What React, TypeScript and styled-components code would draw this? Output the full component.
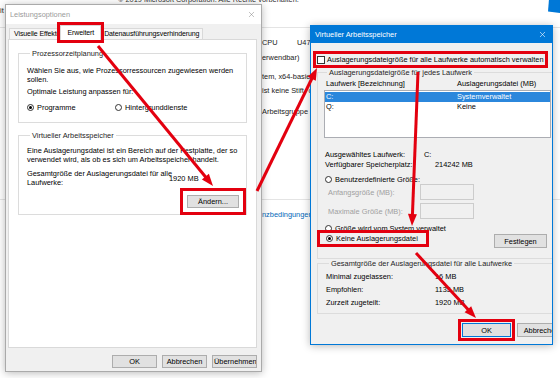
import { FC } from "react"
import styled, { createGlobalStyle, css } from "styled-components"
import { X } from "lucide-react"

const RED = "#e3000f"
const BLUE = "#0078d7"

const GlobalStyle = createGlobalStyle`
  html, body {
    margin: 0;
    padding: 0;
    background: #fff;
  }
  body {
    font-family: "Liberation Sans", Arial, sans-serif;
    font-size: 7.4px;
    color: #000;
  }
  * { box-sizing: border-box; }
`

// red annotation frame drawn round a control
const marked = (offset: number) => css`
  outline: 3px solid ${RED};
  outline-offset: ${offset}px;
`

const Screen = styled.div`
  position: relative;
  width: 560px;
  height: 378px;
  overflow: hidden;
  background: #fff;
  line-height: 9px;
`

/* ---------- system page behind the dialogs ---------- */

const Backdrop = styled.div`
  position: absolute;
  inset: 0;
  display: flex;
  flex-direction: column;
  color: #222;
  white-space: nowrap;
`

const BackdropHeader = styled.div`
  height: 28px;
  flex-shrink: 0;
  display: flex;
  align-items: flex-start;
  border-bottom: 1px solid #e4e4e4;
`

const EdgeText = styled.span`
  width: 118px;
  margin-top: 6px;
`

const Copyright = styled.span`
  margin-top: -5px;
  color: #333;
`

const Logo = styled.svg`
  margin-left: auto;
  margin-top: -1px;
`

const SpecColumn = styled.div`
  padding-left: 262px;
  display: flex;
  flex-direction: column;
`

const SpecLine = styled.div<{ $top: number }>`
  height: 9px;
  margin-top: ${p => p.$top}px;
`

const SpecKey = styled.span`
  display: inline-block;
  width: 35px;
`

const BackdropDivider = styled.div<{ $top: number }>`
  margin-top: ${p => p.$top}px;
  border-top: 1px solid #e4e4e4;
`

const BackdropLink = styled.div`
  padding-left: 262px;
  margin-top: 10px;
  color: #0067b8;
`

/* ---------- shared window parts ---------- */

const Window = styled.div`
  position: absolute;
  display: flex;
  flex-direction: column;
  background: #f0f0f0;
  box-shadow: 0 1px 8px rgba(0, 0, 0, 0.28);
  overflow: hidden;
`

const TitleBar = styled.div<{ $active?: boolean; $h: number }>`
  height: ${p => p.$h}px;
  flex-shrink: 0;
  display: flex;
  align-items: center;
  justify-content: space-between;
  padding: 0 5px 0 4px;
  background: ${p => (p.$active ? BLUE : "#fff")};
  color: ${p => (p.$active ? "#fff" : "#9a9a9a")};
`

const Button = styled.button<{ $w: number; $h?: number; $default?: boolean; $mark?: number }>`
  width: ${p => p.$w}px;
  height: ${p => p.$h ?? 13}px;
  padding: 0 1px;
  flex-shrink: 0;
  border: 1px solid ${p => (p.$default ? BLUE : "#adadad")};
  background: #e1e1e1;
  font: inherit;
  line-height: 9px;
  color: #000;
  white-space: nowrap;
  overflow: hidden;
  ${p => p.$mark !== undefined && marked(p.$mark)}
`

const Group = styled.fieldset<{ $pad: string; $top?: number }>`
  margin: ${p => p.$top ?? 0}px 0 0 0;
  min-width: 0;
  padding: ${p => p.$pad};
  border: 1px solid #dcdcdc;
  display: flex;
  flex-direction: column;
  white-space: nowrap;
`

const Legend = styled.legend`
  padding: 0 2px;
  margin-left: 3px;
  line-height: 9px;
  color: #1e1e1e;
`

const Text = styled.div<{ $top?: number; $muted?: boolean }>`
  margin-top: ${p => p.$top ?? 0}px;
  line-height: 9px;
  color: ${p => (p.$muted ? "#a0a0a0" : "#000")};
`

const RadioItem = styled.span<{ $mark?: boolean }>`
  display: inline-flex;
  align-items: center;
  gap: 3px;
  height: 9px;
  align-self: flex-start;
  ${p =>
    p.$mark &&
    css`
      padding: 0 7px 0 5px;
      margin-left: -4px;
      ${marked(1)}
    `}
`

const RadioDot = styled.span<{ $on?: boolean }>`
  width: 7px;
  height: 7px;
  border-radius: 50%;
  border: 1px solid #333;
  background: #fff;
  display: inline-flex;
  align-items: center;
  justify-content: center;
  &::after {
    content: "";
    width: 3px;
    height: 3px;
    border-radius: 50%;
    background: ${p => (p.$on ? "#000" : "transparent")};
  }
`

const Radio: FC<{ label: string; on?: boolean; mark?: boolean; top?: number }> = ({ label, on, mark, top }) => (
  <RadioItem $mark={mark} style={top ? { marginTop: top } : undefined}>
    <RadioDot $on={on} />
    {label}
  </RadioItem>
)

/* ---------- Leistungsoptionen ---------- */

const PerfWindow = styled(Window)`
  left: 5px;
  top: 4px;
  width: 257px;
  height: 368px;
  border: 1px solid #aaaaaa;
`

const TabStrip = styled.div`
  height: 15px;
  flex-shrink: 0;
  display: flex;
  align-items: flex-end;
  padding-left: 3px;
`

const Tab = styled.div<{ $selected?: boolean }>`
  position: relative;
  height: 11px;
  padding: 0 3px 0 4px;
  font-size: 7px;
  line-height: 10px;
  letter-spacing: -0.1px;
  white-space: nowrap;
  background: #f6f6f6;
  border: 1px solid #d9d9d9;
  border-bottom: none;
  ${p =>
    p.$selected &&
    css`
      z-index: 1;
      height: 15px;
      line-height: 14px;
      padding: 0 6px;
      margin: 0 -2px -1px -4px;
      background: #fff;
      ${marked(0)}
    `}
`

const TabPanel = styled.div`
  flex: 1;
  margin: 0 4px 0 2px;
  padding: 9px 9px 0 9px;
  background: #fff;
  border: 1px solid #d9d9d9;
  display: flex;
  flex-direction: column;
`

const ChoiceRow = styled.div`
  margin-top: 7px;
  display: grid;
  grid-template-columns: 88px auto;
`

const TotalRow = styled.div`
  margin-top: 5px;
  display: flex;
  align-items: center;
`

const TotalLabel = styled.div`
  width: 142px;
  flex-shrink: 0;
  line-height: 9px;
`

const GroupActions = styled.div`
  margin-top: 8px;
  display: flex;
  justify-content: flex-end;
`

const WindowActions = styled.div`
  height: 23px;
  flex-shrink: 0;
  display: flex;
  justify-content: flex-end;
  align-items: flex-start;
  gap: 5px;
  padding: 7px 4px 0 0;
`

/* ---------- Virtueller Arbeitsspeicher ---------- */

const MemWindow = styled(Window)`
  left: 310px;
  top: 25px;
  width: 243px;
  height: 320px;
  border: 1px solid ${BLUE};
`

const MemBody = styled.div`
  width: 250px;
  flex-shrink: 0;
  padding-top: 12px;
  margin-left: 6px;
  display: flex;
  flex-direction: column;
  white-space: nowrap;
`

const CheckRow = styled.label`
  display: inline-flex;
  align-items: center;
  align-self: flex-start;
  gap: 2px;
  height: 9px;
  ${marked(1)}
`

const CheckBox = styled.span`
  width: 8px;
  height: 8px;
  border: 1px solid #333;
  background: #fff;
`

const ColumnRow = styled.div`
  display: grid;
  grid-template-columns: 131px 1fr;
  height: 9px;
  padding-left: 2px;
`

const DriveList = styled.div`
  margin-top: 2.5px;
  width: 227px;
  height: 48px;
  padding-top: 1px;
  background: #fff;
  border: 1px solid #abadb3;
`

const DriveRow = styled.div<{ $selected?: boolean }>`
  display: grid;
  grid-template-columns: 131px 1fr;
  height: 10px;
  line-height: 10px;
  padding-left: 1px;
  background: ${p => (p.$selected ? "#2b87dc" : "transparent")};
  color: ${p => (p.$selected ? "#fff" : "#000")};
`

const InfoGrid = styled.div`
  margin-top: 11.5px;
  padding-left: 1px;
  display: grid;
  grid-template-columns: 99px auto;
  grid-auto-rows: 10px;
  line-height: 10px;
`

const InfoValue = styled.span<{ $shift?: number }>`
  padding-left: ${p => p.$shift ?? 0}px;
`

const SizeRow = styled.div<{ $top: number }>`
  margin-top: ${p => p.$top}px;
  display: grid;
  grid-template-columns: 96px 54px;
  align-items: center;
  height: 16px;
`

const SizeLabel = styled.span`
  padding-left: 4px;
  color: #a0a0a0;
`

const SizeInput = styled.span`
  height: 16px;
  border: 1px solid #cccccc;
  background: #f0f0f0;
`

const OptionIndent = styled.div<{ $top: number }>`
  margin-top: ${p => p.$top}px;
  padding-left: 1px;
  display: flex;
  flex-direction: column;
`

const FinalRow = styled.div`
  margin-top: 1.5px;
  width: 223px;
  height: 14px;
  padding-left: 1px;
  display: flex;
  align-items: center;
  justify-content: space-between;
`

const TotalsGrid = styled.div`
  display: grid;
  grid-template-columns: 109px auto;
  grid-auto-rows: 13px;
  line-height: 13px;
`

const MemActions = styled.div`
  margin-top: 9px;
  display: flex;
  justify-content: flex-end;
  gap: 6px;
  padding-right: 1px;
`

/* ---------- arrows ---------- */

const Overlay = styled.svg`
  position: absolute;
  inset: 0;
  z-index: 10;
  pointer-events: none;
`

type Pt = [number, number, number, number]

const ARROWS: Pt[] = [
  [98, 46, 213, 186],
  [257, 191, 317, 68],
  [418, 72, 412, 226],
  [416, 253, 476, 318],
]

const Arrow: FC<{ p: Pt }> = ({ p }) => {
  const [x1, y1, x2, y2] = p
  const len = Math.hypot(x2 - x1, y2 - y1)
  const ux = (x2 - x1) / len
  const uy = (y2 - y1) / len
  const head = 12
  const half = 4.5
  const bx = x2 - ux * head
  const by = y2 - uy * head
  const px = -uy
  const py = ux
  return (
    <g fill={RED} stroke={RED}>
      <line x1={x1} y1={y1} x2={bx + ux * 2} y2={by + uy * 2} strokeWidth={3} />
      <polygon
        stroke="none"
        points={`${x2},${y2} ${bx + px * half},${by + py * half} ${bx - px * half},${by - py * half}`}
      />
    </g>
  )
}

export default function App() {
  return (
    <>
      <GlobalStyle />
      <Screen>
        <Backdrop>
          <BackdropHeader>
            <EdgeText>it</EdgeText>
            <Copyright>© 2019 Microsoft Corporation. Alle Rechte vorbehalten.</Copyright>
            <Logo width="12" height="14" viewBox="0 0 12 14">
              <polygon points="1,0 12,0 12,14 0,12.5" fill={BLUE} />
            </Logo>
          </BackdropHeader>
          <SpecColumn>
            <SpecLine $top={9.5}>
              <SpecKey>CPU</SpecKey>U470 @ 1.33GHz
            </SpecLine>
            <SpecLine $top={6}>erwendbar)</SpecLine>
            <SpecLine $top={10}>tem, x64-basierter Prozessor</SpecLine>
            <SpecLine $top={5}>ist keine Stift- oder Toucheingabe</SpecLine>
            <SpecLine $top={12}>Arbeitsgruppe</SpecLine>
          </SpecColumn>
          <BackdropDivider $top={83.5} />
          <BackdropLink>nzbedingungen lesen</BackdropLink>
        </Backdrop>

        <PerfWindow>
          <TitleBar $h={19}>
            <span>Leistungsoptionen</span>
            <X size={9} strokeWidth={1.2} color="#777" />
          </TitleBar>
          <TabStrip>
            <Tab>Visuelle Effekte</Tab>
            <Tab $selected>Erweitert</Tab>
            <Tab>Datenausführungsverhinderung</Tab>
          </TabStrip>
          <TabPanel>
            <Group $pad="8px 8px 10px 8px">
              <Legend>Prozessorzeitplanung</Legend>
              <Text>
                Wählen Sie aus, wie Prozessorressourcen zugewiesen werden
                <br />
                sollen.
              </Text>
              <Text $top={3}>Optimale Leistung anpassen für:</Text>
              <ChoiceRow>
                <Radio label="Programme" on />
                <Radio label="Hintergrunddienste" />
              </ChoiceRow>
            </Group>
            <Group $pad="6px 7px 6px 8px" $top={8}>
              <Legend>Virtueller Arbeitsspeicher</Legend>
              <Text>
                Eine Auslagerungsdatei ist ein Bereich auf der Festplatte, der so
                <br />
                verwendet wird, als ob es sich um Arbeitsspeicher handelt.
              </Text>
              <TotalRow>
                <TotalLabel>
                  Gesamtgröße der Auslagerungsdatei für alle
                  <br />
                  Laufwerke:
                </TotalLabel>
                <span>1920 MB</span>
              </TotalRow>
              <GroupActions>
                <Button $w={52} $mark={4}>Ändern...</Button>
              </GroupActions>
            </Group>
          </TabPanel>
          <WindowActions>
            <Button $w={45}>OK</Button>
            <Button $w={45}>Abbrechen</Button>
            <Button $w={45}>Übernehmen</Button>
          </WindowActions>
        </PerfWindow>

        <MemWindow>
          <TitleBar $h={17} $active>
            <span>Virtueller Arbeitsspeicher</span>
            <X size={9} strokeWidth={1.6} color="#fff" />
          </TitleBar>
          <MemBody>
            <CheckRow>
              <CheckBox />
              Auslagerungsdateigröße für alle Laufwerke automatisch verwalten
            </CheckRow>
            <Group $pad="2px 0 10px 6px" $top={3.5}>
              <Legend>Auslagerungsdateigröße für jedes Laufwerk</Legend>
              <ColumnRow>
                <span>Laufwerk [Bezeichnung]</span>
                <span>Auslagerungsdatei (MB)</span>
              </ColumnRow>
              <DriveList>
                <DriveRow $selected>
                  <span>C:</span>
                  <span>Systemverwaltet</span>
                </DriveRow>
                <DriveRow>
                  <span>Q:</span>
                  <span>Keine</span>
                </DriveRow>
              </DriveList>
              <InfoGrid>
                <span>Ausgewähltes Laufwerk:</span>
                <InfoValue>C:</InfoValue>
                <span>Verfügbarer Speicherplatz:</span>
                <InfoValue $shift={11}>214242 MB</InfoValue>
              </InfoGrid>
              <OptionIndent $top={5}>
                <Radio label="Benutzerdefinierte Größe:" />
              </OptionIndent>
              <SizeRow $top={0.5}>
                <SizeLabel>Anfangsgröße (MB):</SizeLabel>
                <SizeInput />
              </SizeRow>
              <SizeRow $top={3}>
                <SizeLabel>Maximale Größe (MB):</SizeLabel>
                <SizeInput />
              </SizeRow>
              <OptionIndent $top={4.5}>
                <Radio label="Größe wird vom System verwaltet" />
              </OptionIndent>
              <FinalRow>
                <Radio label="Keine Auslagerungsdatei" on mark />
                <Button $w={53} $h={14}>Festlegen</Button>
              </FinalRow>
            </Group>
            <Group $pad="2px 0 4px 8px">
              <Legend>Gesamtgröße der Auslagerungsdatei für alle Laufwerke</Legend>
              <TotalsGrid>
                <span>Minimal zugelassen:</span>
                <span>16 MB</span>
                <span>Empfohlen:</span>
                <span>1135 MB</span>
                <span>Zurzeit zugeteilt:</span>
                <span>1920 MB</span>
              </TotalsGrid>
            </Group>
            <MemActions>
              <Button $w={49} $h={14} $default $mark={1}>OK</Button>
              <Button $w={49} $h={14}>Abbrechen</Button>
            </MemActions>
          </MemBody>
        </MemWindow>

        <Overlay width="560" height="378" viewBox="0 0 560 378">
          {ARROWS.map((a, i) => (
            <Arrow key={i} p={a} />
          ))}
        </Overlay>
      </Screen>
    </>
  )
}
